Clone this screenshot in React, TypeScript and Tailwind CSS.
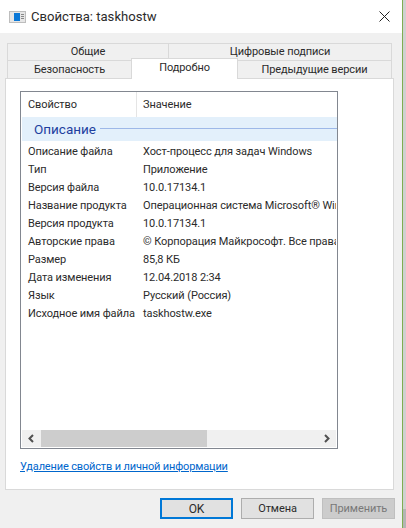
const rows = [
  ['Описание файла', 'Хост-процесс для задач Windows'],
  ['Тип', 'Приложение'],
  ['Версия файла', '10.0.17134.1'],
  ['Название продукта', 'Операционная система Microsoft® Windows®'],
  ['Версия продукта', '10.0.17134.1'],
  ['Авторские права', '© Корпорация Майкрософт. Все права защищены.'],
  ['Размер', '85,8 КБ'],
  ['Дата изменения', '12.04.2018 2:34'],
  ['Язык', 'Русский (Россия)'],
  ['Исходное имя файла', 'taskhostw.exe'],
];

function Tab({ label, className }: { label: string; className: string }) {
  return (
    <div className={`flex items-center justify-center border-t border-r border-[#d9d9d9] bg-[#f0f0f0] ${className}`}>
      {label}
    </div>
  );
}

export default function App() {
  return (
    <div className="w-[406px] h-[528px] flex overflow-hidden bg-[#d0d0d0] text-[11px] tracking-[-0.1px] leading-[18px] text-[#2b2b2b] font-['Roboto','Liberation_Sans',sans-serif]">
      <div className="w-[402px] h-full flex flex-col bg-[#f0f0f0] shrink-0">
        <div className="h-[33px] bg-white flex items-center pl-[9px] shrink-0">
          <svg width="17" height="12" viewBox="0 0 17 12" className="mr-[5px]">
            <rect x="0" y="0" width="17" height="12" fill="#bdbdbd" />
            <rect x="1" y="1" width="15" height="10" fill="#e6e6e6" />
            <rect x="5" y="2" width="6" height="8" fill="#0a78d7" />
            <rect x="12" y="3" width="3" height="1" fill="#888" />
            <rect x="12" y="5" width="3" height="1" fill="#888" />
            <rect x="12" y="7" width="3" height="1" fill="#888" />
          </svg>
          <span className="text-[13.1px] tracking-normal flex-1">Свойства: taskhostw</span>
          <svg width="11" height="11" viewBox="0 0 11 11" className="mr-[12px]">
            <path d="M0.5 0.5 L10.5 10.5 M10.5 0.5 L0.5 10.5" stroke="#222" strokeWidth="1" fill="none" />
          </svg>
        </div>

        <div className="pl-[5px] pt-[10px] flex-1 flex flex-col">
          <div className="relative h-[35px] ml-[2px] w-[385px] shrink-0">
            <div className="flex border-l border-[#d9d9d9] h-[17px]">
              <Tab label="Общие" className="w-[161px]" />
              <Tab label="Цифровые подписи" className="w-[223px]" />
            </div>
            <div className="flex border-l border-[#d9d9d9] h-[18px]">
              <Tab label="Безопасность" className="w-[124px]" />
              <div className="w-[106px]" />
              <Tab label="Предыдущие версии" className="w-[154px]" />
            </div>
            <div className="absolute left-[124px] top-[15px] w-[107px] h-[21px] pb-[2px] bg-white border-t border-x border-[#d9d9d9] flex items-center justify-center z-10">
              Подробно
            </div>
          </div>

          <div className="w-[389px] h-[412px] bg-white border border-[#d9d9d9] shrink-0 pl-[14px] pt-[12px]">
            <div className="w-[318px] h-[358px] border border-[#828790] flex flex-col">
              <div className="h-[25px] flex items-center shrink-0">
                <div className="w-[116px] h-full border-r border-[#e5e5e5] pl-[7px] flex items-center">Свойство</div>
                <div className="pl-[6px]">Значение</div>
              </div>
              <div className="h-[24px] ml-[1px] bg-[#e3f0fb] flex items-center pl-[12px] shrink-0">
                <span className="text-[13.5px] tracking-normal text-[#1f3f9f]">Описание</span>
                <div className="flex-1 h-px bg-[#9db8e8] ml-[4px] mb-[2px]" />
              </div>
              <div className="flex-1 overflow-hidden pt-[2px]">
                {rows.map((r) => (
                  <div key={r[0]} className="flex h-[18px] items-center whitespace-nowrap overflow-hidden">
                    <div className="w-[117px] pl-[7px] shrink-0">{r[0]}</div>
                    <div className="pl-[5px] overflow-hidden mr-[1px]">{r[1]}</div>
                  </div>
                ))}
              </div>
              <div className="h-[17px] mb-[1px] ml-[1px] mr-[1px] bg-[#f0f0f0] flex items-center justify-between shrink-0">
                <svg width="19" height="17" viewBox="0 0 19 17">
                  <path d="M11 5 L7.5 8.5 L11 12" stroke="#505050" strokeWidth="2" fill="none" />
                </svg>
                <div className="flex-1 h-full">
                  <div className="w-[166px] h-full bg-[#cdcdcd]" />
                </div>
                <svg width="19" height="17" viewBox="0 0 19 17">
                  <path d="M8 5 L11.5 8.5 L8 12" stroke="#505050" strokeWidth="2" fill="none" />
                </svg>
              </div>
            </div>
            <div className="mt-[9px] text-[#0066cc] tracking-[-0.15px] underline underline-offset-1">Удаление свойств и личной информации</div>
          </div>

          <div className="flex justify-end gap-[8px] mt-[8px] w-[390px]">
            <div className="w-[73px] h-[21px] bg-[#e1e1e1] border-2 border-[#0078d7] flex items-center justify-center text-[12px]">OK</div>
            <div className="w-[73px] h-[21px] bg-[#e1e1e1] border border-[#adadad] flex items-center justify-center">Отмена</div>
            <div className="w-[73px] h-[21px] bg-[#cccccc] border border-[#bfbfbf] flex items-center justify-center text-[#787878]">Применить</div>
          </div>
        </div>
      </div>
      <div className="w-[1px] h-full bg-[#7fae50] shrink-0" />
      <div className="flex-1 flex flex-col">
        <div className="h-[509px]" />
        <div className="flex-1 bg-[#b4b4b4]" />
      </div>
    </div>
  );
}
